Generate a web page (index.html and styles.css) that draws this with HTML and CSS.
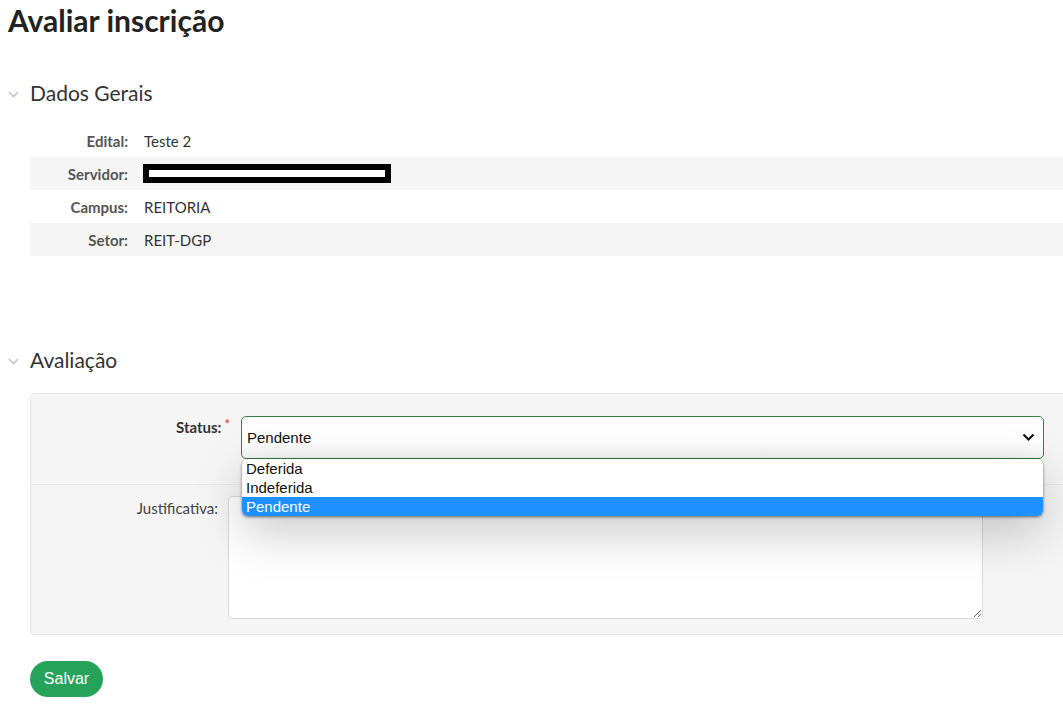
FILE: index.html
```html
<!DOCTYPE html>
<html lang="pt-BR">
<head>
    <meta charset="UTF-8">
    <meta name="viewport" content="width=device-width, initial-scale=1.0">
    <title>Avaliar inscrição</title>
    <link rel="stylesheet" href="styles.css">
</head>
<body>

<h1>Avaliar inscrição</h1>

<div class="section">
    <h2 class="section-title">
        <svg class="chevron" width="11" height="7" viewBox="0 0 11 7"><path d="M1 1l4.5 4.5L10 1" fill="none" stroke="#c4c4c4" stroke-width="1.6"/></svg>
        Dados Gerais
    </h2>
    <div class="info-list">
        <div class="info-row">
            <div class="info-label">Edital:</div>
            <div class="info-value">Teste 2</div>
        </div>
        <div class="info-row">
            <div class="info-label">Servidor:</div>
            <div class="info-value"><span class="redacted"></span></div>
        </div>
        <div class="info-row">
            <div class="info-label">Campus:</div>
            <div class="info-value">REITORIA</div>
        </div>
        <div class="info-row">
            <div class="info-label">Setor:</div>
            <div class="info-value">REIT-DGP</div>
        </div>
    </div>
</div>

<div class="section section-form">
    <h2 class="section-title">
        <svg class="chevron" width="11" height="7" viewBox="0 0 11 7"><path d="M1 1l4.5 4.5L10 1" fill="none" stroke="#c4c4c4" stroke-width="1.6"/></svg>
        Avaliação
    </h2>
    <form class="form-box">
        <div class="form-row row-status">
            <label class="form-label label-status" for="status">Status:<span class="required">*</span></label>
            <div class="select-wrap">
                <div class="select" id="status">
                    <span>Pendente</span>
                    <svg width="13" height="9" viewBox="0 0 13 9"><path d="M1.5 1.5l5 5 5-5" fill="none" stroke="#111" stroke-width="2.2"/></svg>
                </div>
                <ul class="dropdown">
                    <li>Deferida</li>
                    <li>Indeferida</li>
                    <li class="selected">Pendente</li>
                </ul>
            </div>
        </div>
        <div class="form-row row-just">
            <label class="form-label label-just" for="justificativa">Justificativa:</label>
            <textarea id="justificativa" class="textarea"></textarea>
        </div>
    </form>
    <button type="button" class="btn-save">Salvar</button>
</div>

</body>
</html>
```

FILE: styles.css
```css
html {
    overflow: hidden;
}
body {
    font-family: Lato, "Open Sans", sans-serif;
    margin: 0;
    padding: 0 0 0 8px;
    color: #222;
    background: #fff;
}
h1 {
    font-size: 30px;
    font-weight: bold;
    margin: 0;
    padding-top: 3px;
    line-height: 34px;
    color: #222;
}
.section {
    margin-top: 41px;
}
.section-form {
    margin-top: 89px;
}
.section-title {
    display: flex;
    align-items: center;
    font-size: 21px;
    font-weight: normal;
    color: #333;
    margin: 0;
    line-height: 30px;
}
.chevron {
    margin-right: 11px;
    margin-top: 2px;
}
.info-list {
    margin: 16px 0 0 22px;
}
.info-row {
    display: flex;
    align-items: center;
    height: 33px;
    font-size: 15px;
}
.info-row:nth-child(even) {
    background: #f5f5f5;
}
.info-label {
    width: 98px;
    text-align: right;
    font-weight: bold;
    color: #555;
}
.info-value {
    padding-left: 16px;
    color: #333;
}
.redacted {
    display: block;
    width: 248px;
    height: 19px;
    border: 6px solid #000;
    box-sizing: border-box;
    margin-left: -1px;
    background: #fff;
}

.form-box {
    margin: 18px -20px 0 22px;
    background: #f5f5f5;
    border: 1px solid #e6e6e6;
    border-radius: 4px;
}
.form-row {
    display: flex;
    align-items: flex-start;
}
.row-status {
    height: 91px;
    border-bottom: 1px solid #e8e8e8;
    padding-top: 22px;
    box-sizing: border-box;
}
.row-just {
    padding: 11px 0 15px;
}
.form-label {
    font-size: 15px;
    text-align: right;
    box-sizing: border-box;
}
.label-status {
    width: 199px;
    margin-right: 11px;
    font-weight: bold;
    color: #333;
    padding-top: 2px;
}
.required {
    color: #d9534f;
    font-size: 13px;
    vertical-align: top;
    margin-left: 3px;
    position: relative;
    top: -2px;
}
.label-just {
    width: 187px;
    margin-right: 10px;
    color: #444;
    padding-top: 3px;
}
.select-wrap {
    position: relative;
    width: 803px;
}
.select {
    display: flex;
    align-items: center;
    justify-content: space-between;
    height: 43px;
    box-sizing: border-box;
    border: 1px solid #3b7f3f;
    border-radius: 5px;
    background: linear-gradient(#fff 60%, #f4f4f4);
    padding: 0 8px 0 5px;
    font-family: "Liberation Sans", Arial, sans-serif;
    font-size: 15px;
    color: #111;
}
.dropdown {
    position: absolute;
    top: 43px;
    left: 1px;
    right: 1px;
    margin: 0;
    padding: 0;
    list-style: none;
    background: #fff;
    border-radius: 6px;
    overflow: hidden;
    box-shadow: 0 1px 3px rgba(0, 0, 0, 0.55), 0 16px 50px rgba(0, 0, 0, 0.22);
    font-family: "Liberation Sans", Arial, sans-serif;
    font-size: 15px;
    color: #111;
}
.dropdown li {
    height: 19px;
    line-height: 19px;
    padding-left: 4px;
}
.dropdown li.selected {
    background: #1e90ff;
    color: #fff;
}
.textarea {
    display: block;
    width: 755px;
    height: 123px;
    box-sizing: border-box;
    border: 1px solid #d9d9d9;
    border-radius: 4px;
    background: #fff;
    margin: 0;
    font-family: Lato, sans-serif;
}
.btn-save {
    display: block;
    margin: 26px 0 0 22px;
    width: 73px;
    height: 36px;
    border: none;
    border-radius: 18px;
    background: #25a35a;
    color: #fff;
    font-family: "Liberation Sans", Arial, sans-serif;
    font-size: 16px;
    cursor: pointer;
}
```
